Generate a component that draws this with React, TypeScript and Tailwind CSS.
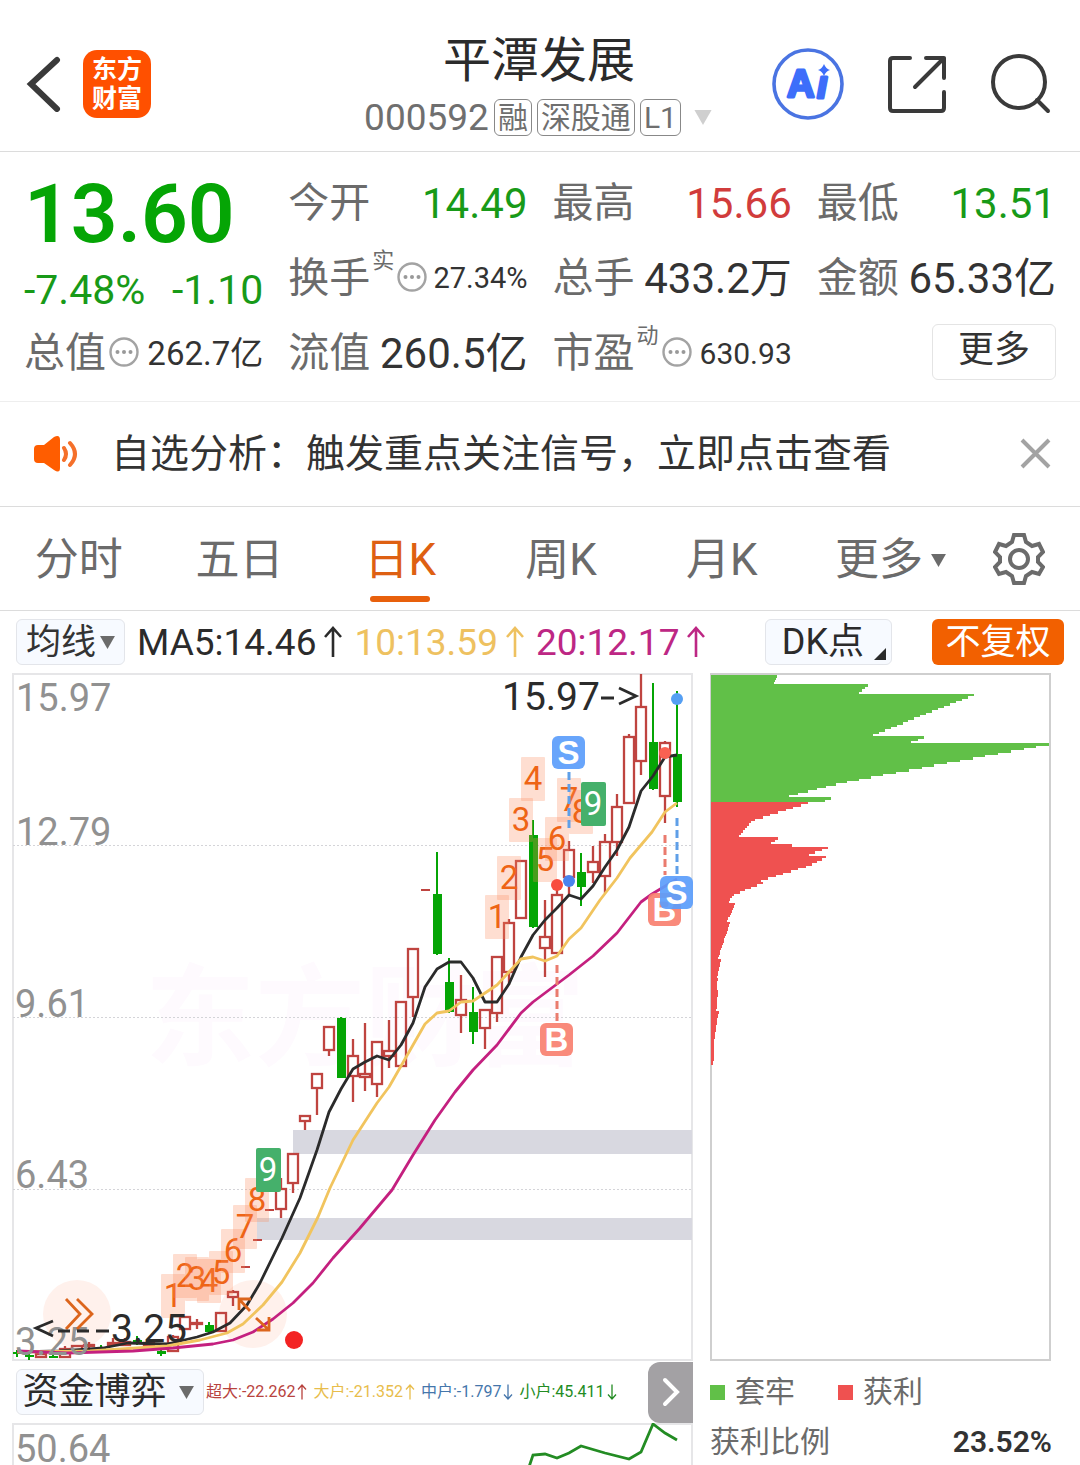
import React from "react";

type Candle = { x: number; hi: number; top: number; bot: number; lo: number; up: boolean };

const c = (x: number, hi: number, top: number, bot: number, lo: number, up = true): Candle => ({ x, hi, top, bot, lo, up });

const CANDLES: Candle[] = [
  c(17, 1350, 1352, 1354, 1357, false),
  c(29, 1353, 1355, 1357, 1360, false),
  c(41, 1352, 1354, 1357, 1358),
  c(53, 1355, 1356, 1358, 1358, false),
  c(65, 1346, 1349, 1357, 1358),
  c(77, 1345, 1346, 1351, 1353),
  c(89, 1342, 1345, 1346, 1350),
  c(101, 1345, 1347, 1349, 1350, false),
  c(113, 1338, 1343, 1345, 1347),
  c(125, 1338, 1342, 1345, 1346),
  c(137, 1336, 1340, 1343, 1345, false),
  c(149, 1341, 1343, 1345, 1347),
  c(161, 1350, 1351, 1354, 1356, false),
  c(173, 1335, 1337, 1351, 1352),
  c(185, 1316, 1317, 1329, 1329),
  c(197, 1319, 1323, 1324, 1329),
  c(209, 1322, 1325, 1332, 1334, false),
  c(221, 1313, 1313, 1331, 1332),
  c(233, 1290, 1292, 1297, 1306),
  c(281, 1178, 1189, 1209, 1218),
  c(293, 1153, 1154, 1183, 1193),
  c(305, 1116, 1116, 1121, 1130),
  c(317, 1073, 1074, 1088, 1115),
  c(329, 1026, 1027, 1050, 1056),
  c(341, 1017, 1018, 1078, 1078, false),
  c(353, 1039, 1056, 1076, 1102),
  c(365, 1023, 1074, 1077, 1091),
  c(377, 1041, 1042, 1084, 1097),
  c(389, 1020, 1051, 1056, 1068),
  c(401, 1001, 1002, 1066, 1067),
  c(413, 948, 949, 997, 1017),
  c(437, 852, 894, 954, 955, false),
  c(449, 958, 982, 1012, 1013, false),
  c(461, 975, 1000, 1015, 1033),
  c(473, 987, 1012, 1032, 1044, false),
  c(485, 1009, 1010, 1028, 1049),
  c(497, 956, 957, 1013, 1022),
  c(509, 919, 923, 972, 985),
  c(521, 861, 861, 918, 918),
  c(533, 820, 835, 927, 928, false),
  c(545, 900, 937, 948, 977),
  c(557, 885, 895, 953, 954),
  c(569, 841, 850, 877, 894),
  c(581, 853, 872, 887, 906, false),
  c(593, 846, 862, 872, 883),
  c(605, 834, 842, 876, 893),
  c(617, 794, 807, 842, 856),
  c(629, 734, 737, 803, 803),
  c(641, 674, 707, 761, 775),
  c(653, 683, 742, 789, 790, false),
  c(665, 741, 743, 796, 823),
  c(677, 691, 754, 802, 807, false),
];

const LIMIT_UPS = [[425, 890], [269, 1210], [257, 1240], [245, 1267]];

const MA5 =
  "17,1352 60,1351 90,1349 103,1348 128,1343 167,1344 180,1341 197,1337 213,1332 230,1323 247,1305 260,1283 282,1238 300,1198 317,1150 329,1112 341,1089 353,1069 365,1062 377,1056 389,1060 401,1045 413,1023 425,987 437,969 449,962 461,962 473,978 485,1002 497,1002 509,984 521,957 533,935 545,920 557,908 569,895 581,899 593,886 605,867 617,850 629,827 641,791 653,776 665,757 677,755";
const MA10 =
  "17,1352 90,1351 167,1346 200,1340 227,1333 243,1324 263,1305 282,1282 300,1253 318,1217 330,1188 353,1140 377,1103 389,1087 401,1066 413,1045 425,1024 437,1013 449,1011 461,1002 473,1001 485,993 497,985 509,972 521,959 533,957 545,961 557,956 569,939 581,928 600,900 617,878 630,858 652,832 665,812 677,803";
const MA20 =
  "17,1351 43,1352 67,1353 133,1351 173,1348 213,1344 233,1340 253,1332 273,1319 293,1303 313,1283 333,1258 360,1228 392,1190 413,1155 435,1120 455,1092 473,1070 497,1045 521,1013 533,1002 569,975 593,956 617,933 641,902 652,894 677,879";

const COUNTS: [number, number, number][] = [
  [1, 161, 1274], [2, 173, 1254], [3, 185, 1257], [4, 197, 1259], [5, 209, 1251], [6, 221, 1229], [7, 233, 1205], [8, 245, 1178],
  [1, 485, 895], [2, 497, 856], [3, 509, 798], [4, 521, 757], [5, 533, 838], [6, 545, 817], [7, 557, 778], [8, 569, 790],
];

// Chip distribution profile: each segment is a list of [y, right edge] in thirds of a pixel.
const CHIPS: [number, number][][] = [
  [[30, 228], [57, 214]],
  [[58, 502], [85, 466]],
  [[86, 825], [212, 505]],
  [[213, 675], [233, 620]],
  [[234, 1060], [335, 512], [355, 411], [395, 250]],
  [[396, 396], [410, 360]],
  [[411, 328], [466, 150], [515, 110]],
  [[516, 232], [536, 205]],
  [[537, 270], [543, 268]],
  [[544, 388], [571, 315]],
  [[572, 380], [600, 325], [650, 165]],
  [[651, 189], [690, 92], [713, 79]],
  [[714, 100], [769, 75]],
  [[770, 85], [881, 47]],
  [[882, 57], [936, 45]],
  [[937, 47], [974, 44]],
  [[975, 48], [1037, 43]],
  [[1038, 50], [1130, 36], [1200, 34]],
];

function chipEdge(v: number) {
  for (const seg of CHIPS) {
    if (v > seg[seg.length - 1][0]) continue;
    if (v <= seg[0][0]) return seg[0][1];
    for (let i = 1; i < seg.length; i++) {
      if (v <= seg[i][0]) {
        const [a, ea] = seg[i - 1];
        const [b, eb] = seg[i];
        return ea + ((eb - ea) * (v - a)) / (b - a);
      }
    }
  }
  return 34;
}

const ROWS = Array.from({ length: 166 }, (_, i) => {
  const v = 30 + i * 7.05;
  return { y: 665 + v / 3, w: Math.min(1050, chipEdge(v + 3) + 6) / 3 - 11, locked: v < 408 };
});

const FONT = "font-[Roboto,'Noto_Sans_CJK_SC',sans-serif]";

function Caret({ className }: { className: string }) {
  return (
    <svg viewBox="0 0 16 14" className={className} aria-hidden="true">
      <path d="M0 0H16L8 14Z" fill="currentColor" />
    </svg>
  );
}

function Arrow({ down = false, className }: { down?: boolean; className: string }) {
  return (
    <svg viewBox="0 0 20 32" className={className} fill="none" stroke="currentColor" strokeWidth="2.6" role="img" aria-label={down ? "↓" : "↑"}>
      <path d={down ? "M10 1V30M2 21L10 30L18 21" : "M10 31V2M2 11L10 2L18 11"} />
    </svg>
  );
}

function Dots() {
  return (
    <svg viewBox="0 0 30 30" className="-mt-1 ml-[3px] size-[30px] shrink-0" aria-hidden="true">
      <circle cx="15" cy="15" r="13.5" fill="none" stroke="#a3a3a3" strokeWidth="2.4" />
      <circle cx="8.5" cy="15" r="2" fill="#999" />
      <circle cx="15" cy="15" r="2" fill="#999" />
      <circle cx="21.5" cy="15" r="2" fill="#999" />
    </svg>
  );
}

type CellProps = { label: string; value: string; sup?: string; dots?: boolean; tone?: string; size?: string };

function Cell({ label, value, sup, dots, tone = "text-[#333]", size = "text-[42px]" }: CellProps) {
  return (
    <div className="flex h-[75px] items-center whitespace-nowrap">
      <span className="text-[41px] text-[#6b6b6b]">{label}</span>
      {sup && <sup className="top-0 -mt-9 ml-[2px] text-[22px] text-[#6b6b6b]">{sup}</sup>}
      {dots && <Dots />}
      <span className={`ml-auto ${size} ${tone}`}>{value}</span>
    </div>
  );
}

function Badge({ x, y, s }: { x: number; y: number; s: "B" | "S" }) {
  return (
    <g>
      <rect x={x} y={y} width="33" height="33" rx="6" fill={s === "B" ? "#f98070" : "#5b9dfb"} fillOpacity="0.92" />
      <text x={x + 16.5} y={y + 28} textAnchor="middle" fontSize="33" fontWeight="700" fill="#fff" fontFamily="Liberation Sans">{s}</text>
    </g>
  );
}

function KChart() {
  return (
    <svg viewBox="12 673 681 688" className="block h-auto w-full" role="img" aria-label="日K线图" fontFamily="Roboto, 'Noto Sans CJK SC', sans-serif">
      <text x="145" y="1057" fontSize="110" fontWeight="700" fill="#fefafe">东方财富</text>
      <rect x="13" y="674" width="679" height="686" fill="none" stroke="#e6e6e8" strokeWidth="2" />
      {[845.5, 1017.5, 1189.5].map((y) => (
        <path key={y} d={`M13 ${y}H692`} stroke="#d4d4d8" strokeDasharray="2 2" />
      ))}
      <rect x="293" y="1130" width="399" height="24" fill="#d8d8e0" />
      <rect x="257" y="1218" width="435" height="22" fill="#d8d8e0" />
      <circle cx="77" cy="1314" r="34" fill="#fff1ec" />
      <circle cx="253" cy="1314" r="34" fill="#fff1ec" />
      {CANDLES.map((k) =>
        k.up ? (
          <g key={k.x} stroke="#bf4440" strokeWidth="2.3" fill="none">
            <path d={`M${k.x} ${k.hi}V${k.top}M${k.x} ${k.bot}V${k.lo}`} />
            <rect x={k.x - 5} y={k.top} width="10" height={k.bot - k.top} />
          </g>
        ) : (
          <g key={k.x} fill="#05a505">
            <rect x={k.x - 1} y={k.hi} width="2" height={k.lo - k.hi} />
            <rect x={k.x - 4} y={k.top} width="9" height={k.bot - k.top} />
          </g>
        )
      )}
      {LIMIT_UPS.map(([x, y]) => (
        <path key={x} d={`M${x - 4} ${y}H${x + 5}`} stroke="#bf4440" strokeWidth="2" />
      ))}
      {COUNTS.map(([n, x, y]) => (
        <g key={x}>
          <rect x={x} y={y} width="24" height="44" rx="1" fill="#fb8a58" fillOpacity="0.28" />
          <text x={x + 12} y={y + 33} textAnchor="middle" fontSize="33" fill="#ee6415">{n}</text>
        </g>
      ))}
      {[[256, 1148], [581, 782]].map(([x, y]) => (
        <g key={x}>
          <rect x={x} y={y} width="25" height="44" rx="2" fill="#45b06b" />
          <text x={x + 12} y={y + 33} textAnchor="middle" fontSize="33" fill="#fff">9</text>
        </g>
      ))}
      <g fill="none" strokeWidth="2.8" strokeLinejoin="round">
        <polyline points={MA5} stroke="#2b2b2b" />
        <polyline points={MA10} stroke="#f1c45e" />
        <polyline points={MA20} stroke="#c4207f" />
      </g>
      <g fontSize="38" fill="#919191">
        <text x="16" y="711">15.97</text>
        <text x="16" y="845">12.79</text>
        <text x="15" y="1017">9.61</text>
        <text x="15" y="1188">6.43</text>
        <text x="15" y="1355">3.25</text>
      </g>
      <g fill="none" strokeWidth="3" strokeDasharray="8 4">
        <path d="M569 772V828M677 818V874" stroke="#5f9fe8" />
        <path d="M557 965V1021M665 835V875" stroke="#ea7b6e" />
      </g>
      <circle cx="677" cy="699" r="6" fill="#559ff3" />
      <circle cx="665" cy="753" r="6" fill="#fa6152" />
      <circle cx="557" cy="885" r="6" fill="#f84c3e" />
      <circle cx="569" cy="881" r="6" fill="#4a83ee" />
      <Badge x={552} y={736} s="S" />
      <Badge x={540} y={1023} s="B" />
      <Badge x={648} y={893} s="B" />
      <Badge x={660} y={876} s="S" />
      <g fill="none" stroke="#dc651c" strokeWidth="2.8">
        <path d="M66 1299L80 1314L66 1329M77 1299L92 1314L77 1329" />
        <path d="M250 1311L239 1299M239 1310V1299H251M256 1318L269 1330M269 1317V1330H257" />
      </g>
      <circle cx="294" cy="1340" r="9" fill="#f32323" />
      <g fontSize="39" fill="#2b2b2b">
        <text x="502" y="710">15.97</text>
        <text x="111" y="1342">3.25</text>
      </g>
      <g fill="none" stroke="#2b2b2b" strokeWidth="2.8">
        <path d="M601 698H614M619 688L636 696L619 704M53 1321L36 1328L53 1336M58 1331H70M77 1331H89M96 1331H109" />
      </g>
    </svg>
  );
}

function ChipChart() {
  return (
    <svg viewBox="710 673 342 689" className="block h-auto w-full" role="img" aria-label="筹码分布">
      <rect x="711" y="674" width="339" height="686" fill="none" stroke="#cfcfcf" strokeWidth="2" />
      {ROWS.map((r) => (
        <rect key={r.y} x="711" y={r.y} width={Math.max(0.5, r.w)} height="2.5" fill={r.locked ? "#61c048" : "#ef5150"} shapeRendering="crispEdges" />
      ))}
    </svg>
  );
}

const MAS = [
  { text: "MA5:14.46", tone: "text-[#2b2b2b]" },
  { text: "10:13.59", tone: "text-[#eec160]" },
  { text: "20:12.17", tone: "text-[#bd2784]" },
];

const FLOWS = [
  { text: "超大:-22.262", tone: "text-[#b8433e]" },
  { text: "大户:-21.352", tone: "text-[#e8bd4c]" },
  { text: "中户:-1.797", tone: "text-[#4576ab]", down: true },
  { text: "小户:45.411", tone: "text-[#238c23]", down: true },
];

const TABS = ["分时", "五日", "日K", "周K", "月K"];

export default function App() {
  return (
    <main className={`w-full overflow-hidden bg-white leading-none text-[#333] ${FONT}`}>
      <header className="grid h-[152px] grid-cols-[1fr_auto_1fr] items-center border-b border-[#dcdcdc] pt-4 pr-7 pl-[26px]">
        <div className="flex items-center gap-[21px]">
          <button aria-label="返回">
            <svg viewBox="0 0 36 56" className="h-14 w-9" fill="none" stroke="#3a3a3a" strokeWidth="6" aria-hidden="true">
              <path d="M31 4L5 28L31 53" strokeLinecap="round" />
            </svg>
          </button>
          <a href="#home" className="flex size-[68px] flex-col items-center justify-center gap-1 rounded-[14px] bg-[#ff5000] text-[25px] leading-[25px] font-bold text-white">
            <span>东方</span>
            <span>财富</span>
          </a>
        </div>
        <div className="flex flex-col items-center gap-[12px] pt-1">
          <h1 className="text-[48px] leading-[52px] text-[#2b2b2b]">平潭发展</h1>
          <div className="flex items-center gap-[5px] text-[30px] text-[#6f6f6f]">
            <span className="text-[37px]">000592</span>
            {["融", "深股通", "L1"].map((t) => (
              <span key={t} className="flex h-[37px] items-center rounded-md border border-[#888] px-[3px]">{t}</span>
            ))}
            <Caret className="ml-[6px] h-[15px] w-[22px] text-[#cfcfcf]" />
          </div>
        </div>
        <div className="flex items-center justify-end gap-[43px]">
          <button aria-label="Ai">
            <svg viewBox="0 0 72 72" className="size-[72px]" aria-hidden="true">
              <circle cx="36" cy="36" r="34" fill="none" stroke="#4a74e2" strokeWidth="3.6" />
              <g fill="#3d6efa" stroke="#3d6efa" strokeLinejoin="round">
                <text x="15" y="49" fontFamily="Liberation Sans" fontSize="38" fontWeight="700" strokeWidth="3">A</text>
                <text x="45" y="50" fontFamily="Liberation Sans" fontSize="38" fontWeight="700" fontStyle="italic" strokeWidth="3">ı</text>
              </g>
              <path d="M52 16Q54 21 58 22Q54 23 52 28Q50 23 46 22Q50 21 52 16Z" fill="#3d6efa" />
            </svg>
          </button>
          <button aria-label="分享">
            <svg viewBox="0 0 60 60" className="size-[60px]" fill="none" stroke="#3a3a3a" strokeWidth="4" strokeLinecap="round" strokeLinejoin="round" aria-hidden="true">
              <path d="M23 4H6Q3 4 3 7V54Q3 57 6 57H54Q57 57 57 54V38M39 4H57V24M57 4L28 33" />
            </svg>
          </button>
          <button aria-label="搜索">
            <svg viewBox="0 0 62 62" className="size-[62px]" fill="none" stroke="#3a3a3a" strokeWidth="4" strokeLinecap="round" aria-hidden="true">
              <circle cx="29" cy="29" r="26" />
              <path d="M47 47L58 58" />
            </svg>
          </button>
        </div>
      </header>

      <section className="grid grid-cols-4 gap-x-[25px] border-b border-[#eee] px-6 pt-[14px] pb-[10px]">
        <div className="row-span-2 flex flex-col whitespace-nowrap text-[#05a505]">
          <span className="pt-2 text-[82px] leading-[80px] font-semibold">13.60</span>
          <div className="mt-[16px] flex justify-between text-[41px] text-[#189a18]">
            <span>-7.48%</span>
            <span>-1.10</span>
          </div>
        </div>
        <Cell label="今开" value="14.49" tone="text-[#189a18]" />
        <Cell label="最高" value="15.66" tone="text-[#d13c3c]" />
        <Cell label="最低" value="13.51" tone="text-[#189a18]" />
        <Cell label="换手" sup="实" dots value="27.34%" size="text-[29px]" />
        <Cell label="总手" value="433.2万" />
        <Cell label="金额" value="65.33亿" />
        <Cell label="总值" dots value="262.7亿" size="text-[33px]" />
        <Cell label="流值" value="260.5亿" />
        <Cell label="市盈" sup="动" dots value="630.93" size="text-[30px]" />
        <div className="flex h-[75px] items-center justify-end pb-1">
          <button className="h-14 w-[124px] rounded-md border border-[#e4e4e4] pb-1 text-[36px]">更多</button>
        </div>
      </section>

      <section className="flex h-[105px] items-center border-b border-[#dcdcdc] pr-7 pl-[33px]">
        <svg viewBox="0 0 46 36" className="h-9 w-[46px]" aria-hidden="true">
          <path d="M1 13Q1 9 5 9H11L21 1Q27 -2 27 4V32Q27 38 21 34L11 27H5Q1 27 1 23Z" fill="#ff5d00" />
          <path d="M31 12Q35 18 31 24M37 7Q47 18 37 29" fill="none" stroke="#f5702a" strokeWidth="4" strokeLinecap="round" />
        </svg>
        <p className="ml-8 flex-1 text-[39px] whitespace-nowrap">自选分析：触发重点关注信号，立即点击查看</p>
        <button aria-label="关闭">
          <svg viewBox="0 0 34 34" className="size-[34px]" stroke="#a3a3a3" strokeWidth="4" aria-hidden="true">
            <path d="M4 3L31 30M31 3L4 30" />
          </svg>
        </button>
      </section>

      <nav className="flex h-[104px] items-stretch border-b border-[#dcdcdc] pr-5 text-[44px] text-[#6b6b6b]">
        {TABS.map((t) => (
          <button key={t} className={`flex flex-[160] flex-col items-center justify-end pr-[3px] ${t === "日K" ? "text-[#de6012]" : ""}`}>
            <span>{t}</span>
            <span className={`mt-[14px] mb-2 h-[6px] w-[60px] rounded-full ${t === "日K" ? "bg-[#e8600c]" : ""}`} />
          </button>
        ))}
        <button className="flex flex-[176] items-center justify-center gap-2 pt-[3px]">
          更多
          <Caret className="h-[13px] w-[15px]" />
        </button>
        <button className="flex flex-[84] items-center justify-center" aria-label="设置">
          <svg viewBox="0 0 52 54" className="h-[54px] w-[52px]" fill="none" stroke="#6b6b6b" strokeWidth="4" aria-hidden="true">
            <path d="M21 3H31L33 10L39 14L46 12L50 20L45 25V30L50 35L46 42L39 40L33 44L31 51H21L19 44L13 40L6 42L2 35L7 30V25L2 20L6 12L13 14L19 10Z" />
            <circle cx="26" cy="27" r="9" />
          </svg>
        </button>
      </nav>

      <div className="flex h-[62px] items-center pr-4 pl-4 whitespace-nowrap">
        <button className="flex h-[46px] w-[109px] items-center justify-center gap-1 rounded-md border border-[#e3e5ea] bg-[#f7faff] text-[35px]">
          均线
          <Caret className="h-[13px] w-[15px] text-[#6b6b6b]" />
        </button>
        <div className="ml-3 flex gap-[10px] text-[37px]">
          {MAS.map((m) => (
            <span key={m.text} className={`flex items-center gap-[6px] ${m.tone}`}>
              {m.text}
              <Arrow className="h-8 w-[22px]" />
            </span>
          ))}
        </div>
        <button className="ml-auto flex h-[46px] w-[127px] items-end justify-end gap-[10px] rounded-md border border-[#e3e5ea] bg-[#f7faff] pr-[5px] pb-1 text-[36px] text-[#2b2b2b]">
          DK点
          <svg viewBox="0 0 12 12" className="size-3" aria-hidden="true">
            <path d="M12 0V12H0Z" fill="#2b2b2b" />
          </svg>
        </button>
        <button className="ml-10 h-[46px] w-[132px] rounded-md bg-[#f26000] text-[35px] text-white">不复权</button>
      </div>

      <div className="flex gap-[17px] pr-7 pl-3">
        <div className="min-w-0 flex-[681]">
          <KChart />
          <div className="flex h-[62px] items-center pl-1">
            <button className="flex h-[46px] w-[188px] shrink-0 items-center justify-center gap-3 rounded-md border border-[#e3e5ea] bg-[#f7faff] pr-1 text-[36px] text-[#2b2b2b]">
              资金博弈
              <Caret className="h-[13px] w-[15px] text-[#6b6b6b]" />
            </button>
            <div className="ml-[2px] flex gap-[6px] text-[16px] whitespace-nowrap">
              {FLOWS.map((f) => (
                <span key={f.text} className={`flex items-center gap-[2px] ${f.tone}`}>
                  {f.text}
                  <Arrow down={f.down} className="h-[24px] w-[10px]" />
                </span>
              ))}
            </div>
            <button className="ml-auto flex h-[61px] w-[45px] shrink-0 items-center justify-center rounded-l-xl bg-[#a3a1a4]" aria-label="展开">
              <svg viewBox="0 0 18 30" className="h-[30px] w-[18px]" fill="none" stroke="#fff" strokeWidth="4" strokeLinecap="round" aria-hidden="true">
                <path d="M3 3L15 15L3 27" />
              </svg>
            </button>
          </div>
          <svg viewBox="12 1423 681 42" className="block h-auto w-full" role="img" aria-label="资金博弈走势">
            <path d="M13 1466V1424H692V1466" fill="none" stroke="#e6e6e8" strokeWidth="2" />
            <text x="15" y="1462" fontSize="38" fill="#919191" fontFamily="Roboto">50.64</text>
            <polyline points="529,1467 533,1455 545,1454 557,1458 569,1453 581,1446 605,1453 629,1459 641,1452 653,1424 665,1433 677,1440" fill="none" stroke="#238c23" strokeWidth="2.8" />
          </svg>
        </div>
        <div className="min-w-0 flex-[342]">
          <ChipChart />
          <div className="flex h-[60px] items-center text-[30px] text-[#6b6b6b]">
            <span className="size-[15px] bg-[#61c048]" />
            <span className="ml-[10px]">套牢</span>
            <span className="ml-[43px] size-[15px] bg-[#ef5150]" />
            <span className="ml-[10px]">获利</span>
          </div>
          <div className="flex h-10 items-center justify-between text-[30px] text-[#6b6b6b]">
            <span>获利比例</span>
            <span className="text-[30px] font-semibold text-[#333]">23.52%</span>
          </div>
        </div>
      </div>
    </main>
  );
}
